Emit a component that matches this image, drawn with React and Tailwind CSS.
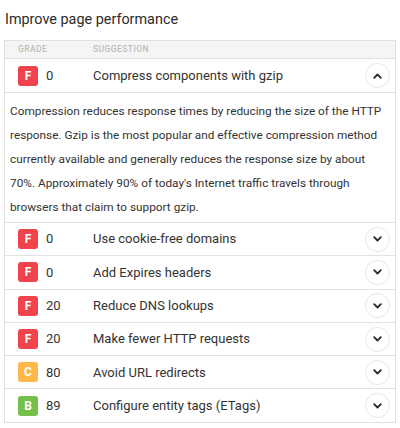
import { useState } from 'react';

const ROWS = [
  {
    grade: 'F',
    score: 0,
    title: 'Compress components with gzip',
    desc: "Compression reduces response times by reducing the size of the HTTP response. Gzip is the most popular and effective compression method currently available and generally reduces the response size by about 70%. Approximately 90% of today's Internet traffic travels through browsers that claim to support gzip.",
  },
  { grade: 'F', score: 0, title: 'Use cookie-free domains' },
  { grade: 'F', score: 0, title: 'Add Expires headers' },
  { grade: 'F', score: 20, title: 'Reduce DNS lookups' },
  { grade: 'F', score: 20, title: 'Make fewer HTTP requests' },
  { grade: 'C', score: 80, title: 'Avoid URL redirects' },
  { grade: 'B', score: 89, title: 'Configure entity tags (ETags)' },
];

const GRADE_BG = {
  F: 'bg-[#f1434c]',
  C: 'bg-[#fdb74b]',
  B: 'bg-[#74c04b]',
};

function Chevron({ up }) {
  return (
    <span className="flex items-center justify-center w-[25px] h-[25px] rounded-full border border-[#e6e6e6] bg-white">
      <svg width="9" height="6" viewBox="0 0 9 6" fill="none">
        <path
          d={up ? 'M1.2 4.8 4.5 1.5l3.3 3.3' : 'M1.2 1.2 4.5 4.5l3.3-3.3'}
          stroke="#2a2a2a"
          strokeWidth="1.8"
          strokeLinecap="round"
          strokeLinejoin="round"
        />
      </svg>
    </span>
  );
}

export default function App() {
  const [open, setOpen] = useState(0);

  return (
    <div className="w-[400px] h-[428px] bg-white text-[#333] font-['Roboto','Noto_Sans',sans-serif] overflow-hidden">
      <h2 className="pl-[5px] pt-[9px] h-[40px] text-[14.4px] leading-[22px] text-[#2b2b2b]">
        Improve page performance
      </h2>
      <div className="ml-[4px] w-[392px] border border-[#e2e2e2]">
        <div className="flex items-center h-[17px] bg-[#f5f5f5] text-[8.5px] font-medium tracking-[0.05em] text-[#bdbdbd]">
          <span className="pl-[13px] w-[88px]">GRADE</span>
          <span>SUGGESTION</span>
        </div>
        {ROWS.map((row, i) => (
          <div key={i} className="border-t border-[#e2e2e2]">
            <button
              onClick={() => setOpen(open === i ? -1 : i)}
              className={`w-full flex items-center text-left ${i === 0 ? 'h-[33px]' : 'h-[32.3px]'}`}
            >
              <span className="pl-[13px] w-[41px]">
                <span
                  className={`flex items-center justify-center w-[20px] h-[20px] rounded-[3px] text-white text-[12px] font-bold ${GRADE_BG[row.grade]}`}
                >
                  {row.grade}
                </span>
              </span>
              <span className="w-[47px] text-[13px]">{row.score}</span>
              <span className="flex-1 text-[13px]">{row.title}</span>
              <span className="pr-[5px]">
                <Chevron up={open === i} />
              </span>
            </button>
            {open === i && row.desc && (
              <p className="border-t border-[#e2e2e2] px-[5px] pt-[6px] h-[130px] text-[11.8px] leading-[24px] text-[#333]">
                {row.desc}
              </p>
            )}
          </div>
        ))}
      </div>
    </div>
  );
}
